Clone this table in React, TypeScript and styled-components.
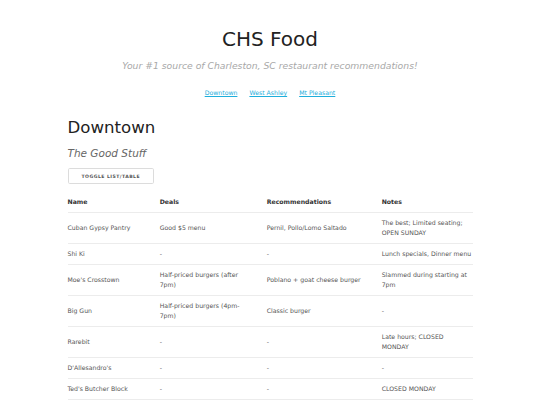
import React from "react"
import styled, { createGlobalStyle } from "styled-components"

const GlobalStyle = createGlobalStyle`
  html, body {
    margin: 0;
    padding: 0;
    background: #fff;
  }
  body {
    font-family: "DejaVu Sans", Verdana, sans-serif;
    color: #222;
  }
`

interface Place {
  name: string
  deals: string
  recs: string
  notes: string
}

const PLACES: Place[] = [
  { name: "Cuban Gypsy Pantry", deals: "Good $5 menu", recs: "Pernil, Pollo/Lomo Saltado", notes: "The best; Limited seating; OPEN SUNDAY" },
  { name: "Shi Ki", deals: "-", recs: "-", notes: "Lunch specials, Dinner menu" },
  { name: "Moe's Crosstown", deals: "Half-priced burgers (after 7pm)", recs: "Poblano + goat cheese burger", notes: "Slammed during starting at 7pm" },
  { name: "Big Gun", deals: "Half-priced burgers (4pm-7pm)", recs: "Classic burger", notes: "-" },
  { name: "Rarebit", deals: "-", recs: "-", notes: "Late hours; CLOSED MONDAY" },
  { name: "D'Allesandro's", deals: "-", recs: "-", notes: "-" },
  { name: "Ted's Butcher Block", deals: "-", recs: "-", notes: "CLOSED MONDAY" },
]

const NAV = ["Downtown", "West Ashley", "Mt Pleasant"]

const Page = styled.div`
  width: 405px;
  margin: 0 auto;
  padding-top: 27px;
`

const Header = styled.header`
  display: flex;
  flex-direction: column;
  align-items: center;
`

const Title = styled.h1`
  margin: 0;
  font-size: 20px;
  line-height: 24px;
  font-weight: 400;
  color: #222;
`

const Tagline = styled.p`
  margin: 8px 0 0;
  font-size: 9.25px;
  line-height: 14px;
  font-style: italic;
  color: #a8a8a8;
`

const Nav = styled.nav`
  display: flex;
  gap: 12px;
  margin-top: 15px;
`

const NavLink = styled.a`
  font-size: 6.2px;
  line-height: 10px;
  color: #1eaedb;
  text-decoration: underline;
`

const SectionTitle = styled.h2`
  margin: 20px 0 0;
  font-size: 16.6px;
  line-height: 20px;
  font-weight: 400;
  color: #222;
`

const SectionSub = styled.h3`
  margin: 8px 0 0;
  font-size: 10.5px;
  line-height: 14px;
  font-weight: 400;
  font-style: italic;
  color: #666;
`

const ToggleButton = styled.button`
  display: block;
  margin-top: 8px;
  height: 16px;
  padding: 0 13px;
  background: #fff;
  border: 1px solid #dcdcdc;
  border-radius: 1.7px;
  font-family: "DejaVu Sans", Verdana, sans-serif;
  font-size: 4.6px;
  font-weight: 700;
  letter-spacing: 0.45px;
  text-transform: uppercase;
  color: #555;
`

const Table = styled.table`
  margin-top: 8px;
  width: 405px;
  border-collapse: collapse;
  table-layout: fixed;
`

const Col = styled.col<{ $w: number }>`
  width: ${p => p.$w}px;
`

const Th = styled.th`
  text-align: left;
  padding: 5px 6.2px;
  border-bottom: 1px solid #ececec;
  font-size: 6.2px;
  line-height: 10px;
  font-weight: 700;
  color: #333;
  &:first-child { padding-left: 0; }
  &:last-child { padding-right: 0; }
`

const Td = styled.td`
  text-align: left;
  vertical-align: middle;
  padding: 5px 6.2px;
  border-bottom: 1px solid #ececec;
  font-size: 6.2px;
  line-height: 10px;
  color: #555;
  &:first-child { padding-left: 0; }
  &:last-child { padding-right: 0; }
`

const App: React.FC = () => (
  <>
    <GlobalStyle />
    <Page>
      <Header>
        <Title>CHS Food</Title>
        <Tagline>Your #1 source of Charleston, SC restaurant recommendations!</Tagline>
        <Nav>
          {NAV.map(n => (
            <NavLink key={n} href="#">{n}</NavLink>
          ))}
        </Nav>
      </Header>
      <SectionTitle>Downtown</SectionTitle>
      <SectionSub>The Good Stuff</SectionSub>
      <ToggleButton>Toggle list/table</ToggleButton>
      <Table>
        <colgroup>
          <Col $w={86} />
          <Col $w={107} />
          <Col $w={115} />
          <Col $w={97} />
        </colgroup>
        <thead>
          <tr>
            <Th>Name</Th>
            <Th>Deals</Th>
            <Th>Recommendations</Th>
            <Th>Notes</Th>
          </tr>
        </thead>
        <tbody>
          {PLACES.map(p => (
            <tr key={p.name}>
              <Td>{p.name}</Td>
              <Td>{p.deals}</Td>
              <Td>{p.recs}</Td>
              <Td>{p.notes}</Td>
            </tr>
          ))}
        </tbody>
      </Table>
    </Page>
  </>
)

export default App
